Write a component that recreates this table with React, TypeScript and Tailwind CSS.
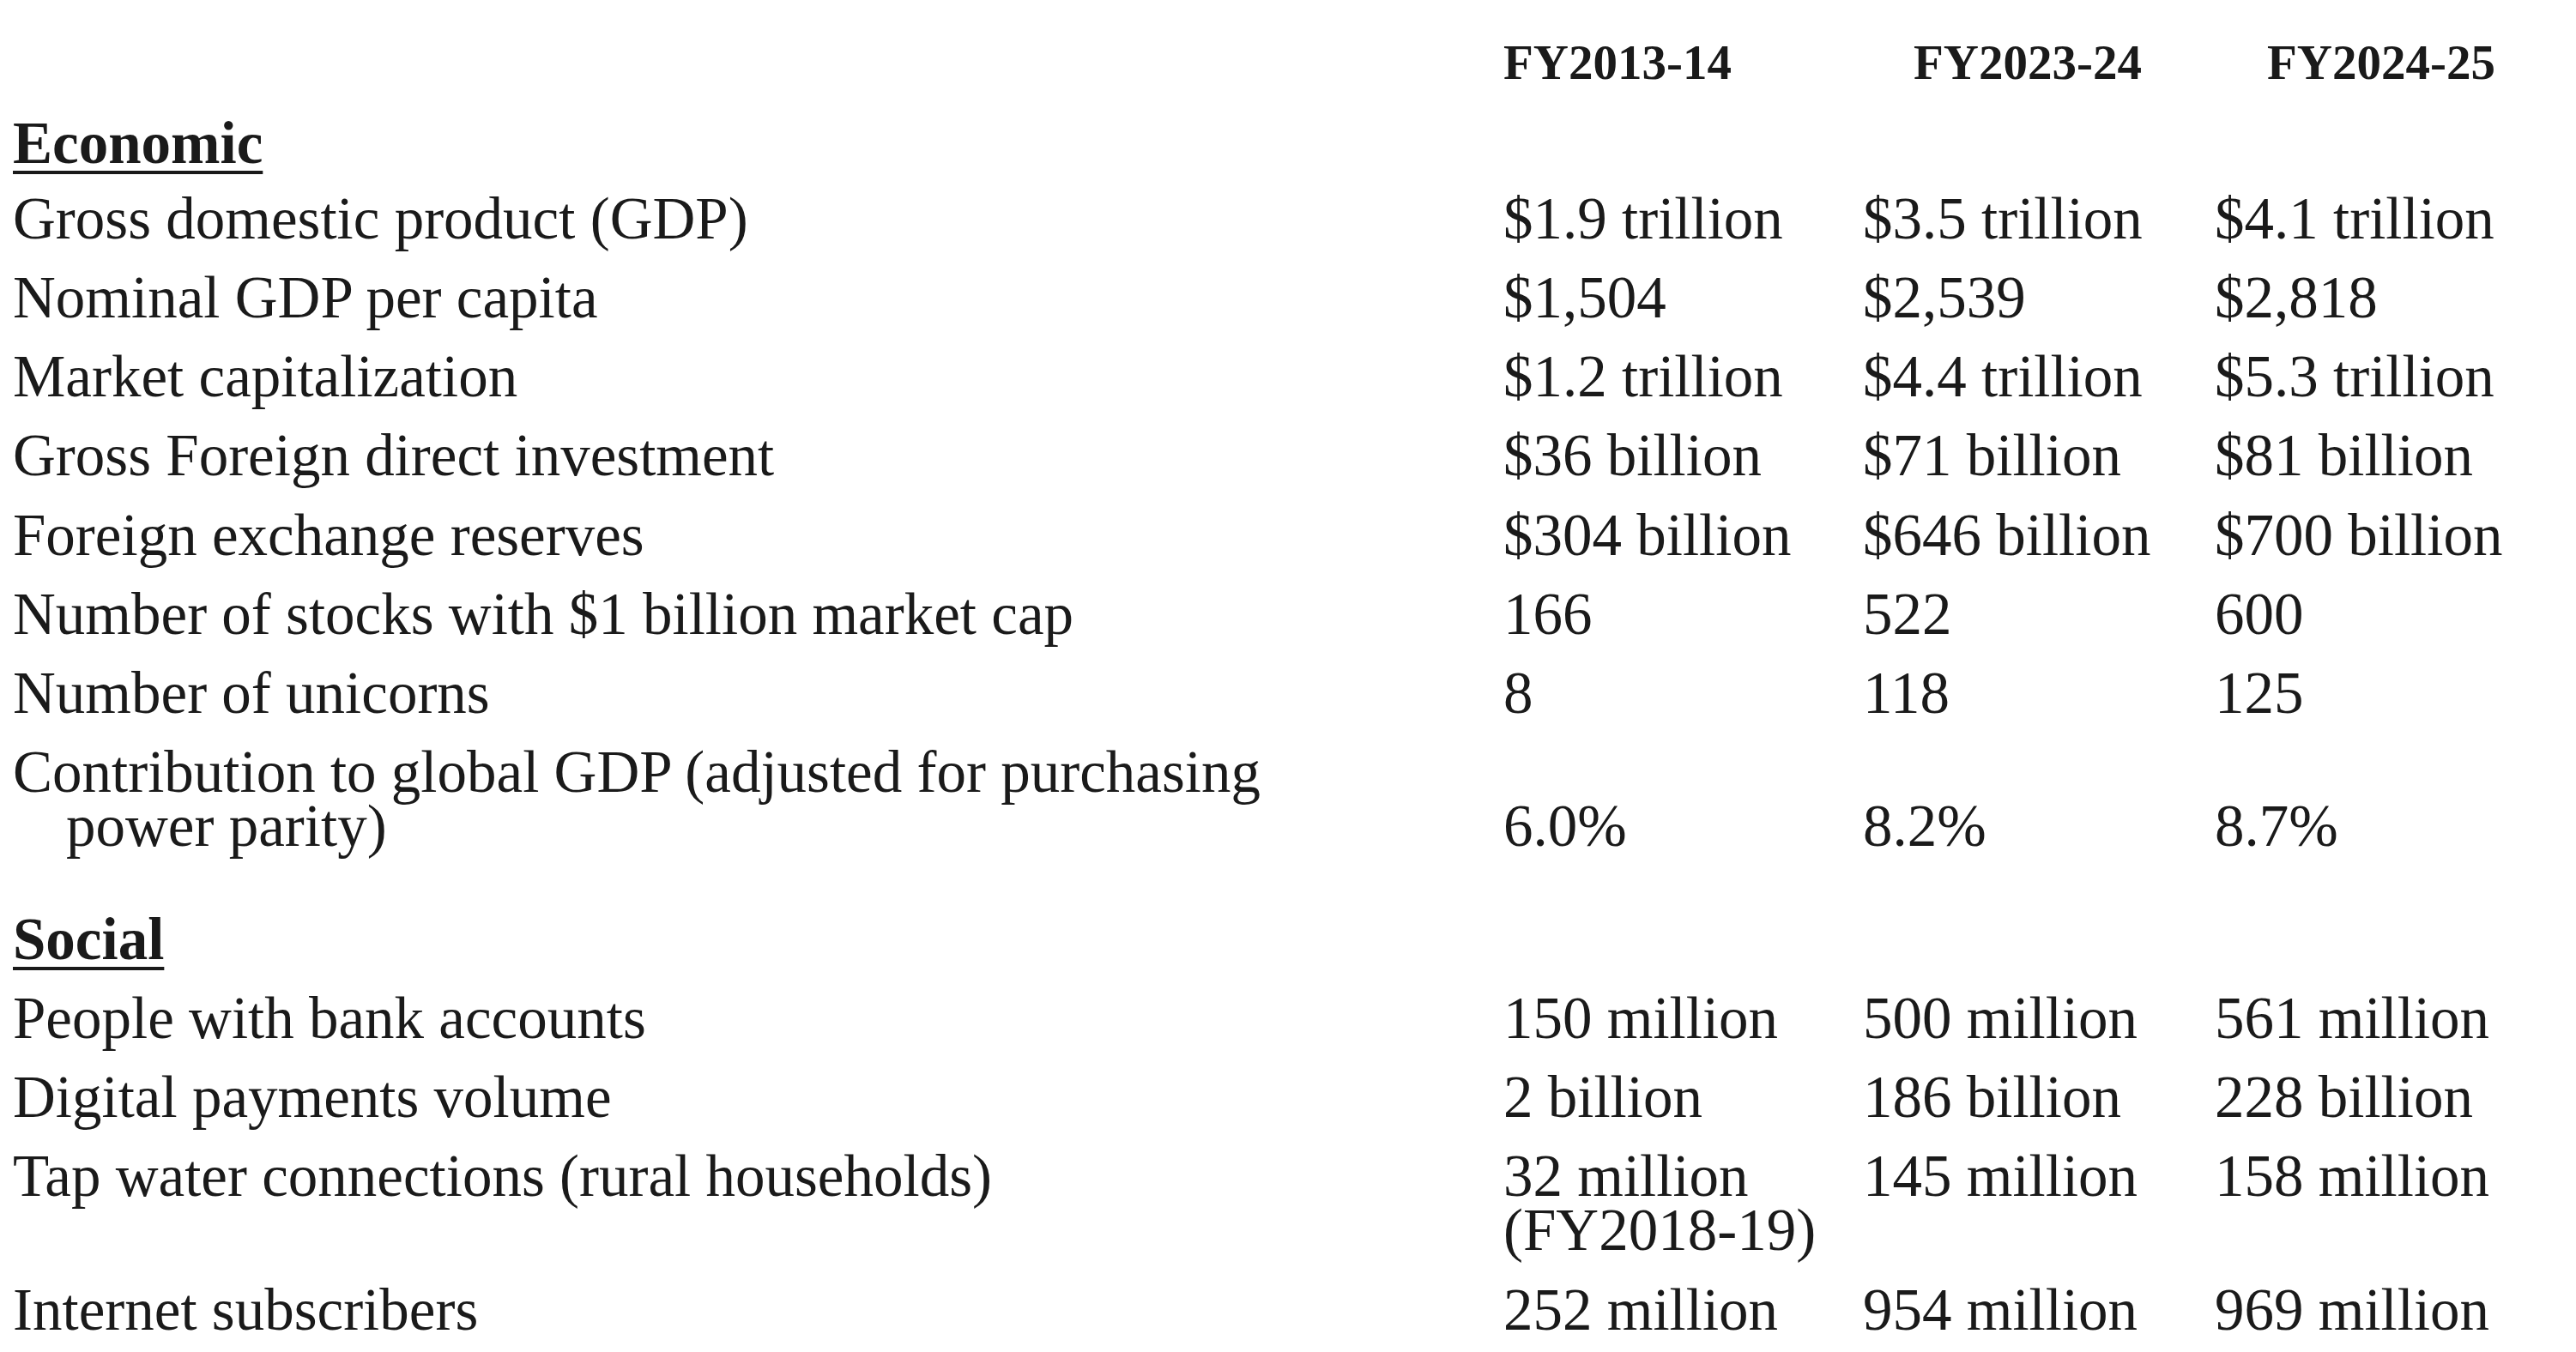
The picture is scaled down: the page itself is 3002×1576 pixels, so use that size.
import React from "react";

type Row = {
  label: string;
  values: [string, string, string];
  extra?: string;
};

const economic: Row[] = [
  { label: "Gross domestic product (GDP)", values: ["$1.9 trillion", "$3.5 trillion", "$4.1 trillion"] },
  { label: "Nominal GDP per capita", values: ["$1,504", "$2,539", "$2,818"] },
  { label: "Market capitalization", values: ["$1.2 trillion", "$4.4 trillion", "$5.3 trillion"] },
  { label: "Gross Foreign direct investment", values: ["$36 billion", "$71 billion", "$81 billion"] },
  { label: "Foreign exchange reserves", values: ["$304 billion", "$646 billion", "$700 billion"] },
  { label: "Number of stocks with $1 billion market cap", values: ["166", "522", "600"] },
  { label: "Number of unicorns", values: ["8", "118", "125"] },
];

const social: Row[] = [
  { label: "People with bank accounts", values: ["150 million", "500 million", "561 million"] },
  { label: "Digital payments volume", values: ["2 billion", "186 billion", "228 billion"] },
  {
    label: "Tap water connections (rural households)",
    values: ["32 million", "145 million", "158 million"],
    extra: "(FY2018-19)",
  },
  { label: "Internet subscribers", values: ["252 million", "954 million", "969 million"] },
];

function DataRow({ row }: { row: Row }) {
  return (
    <div className="grid grid-cols-[1737px_419px_410px_1fr] py-[14.6px] leading-[63px]">
      <div className="max-w-[1580px]">{row.label}</div>
      <div>
        <div>{row.values[0]}</div>
        {row.extra && <div>{row.extra}</div>}
      </div>
      <div>{row.values[1]}</div>
      <div>{row.values[2]}</div>
    </div>
  );
}

function SectionTitle({ title, className }: { title: string; className?: string }) {
  return (
    <div className={`leading-[63px] ${className ?? ""}`}>
      <span className="font-bold underline decoration-[4px] underline-offset-[9px]">{title}</span>
    </div>
  );
}

export default function App() {
  return (
    <div className="min-h-screen w-[3002px] bg-white pl-[15px] pt-[26.9px] font-['Liberation_Serif',serif] text-[69px] text-[#1a1a1a]">
      {/* column headings */}
      <div className="grid grid-cols-[1737px_419px_410px_1fr] py-[14.6px] text-[57px] font-bold leading-[63px]">
        <div />
        <div>FY2013-14</div>
        <div className="pl-[59px]">FY2023-24</div>
        <div className="pl-[61px]">FY2024-25</div>
      </div>

      <SectionTitle title="Economic" className="pt-[16.6px] pb-[10.6px]" />
      {economic.map((r) => (
        <DataRow key={r.label} row={r} />
      ))}

      <div className="grid grid-cols-[1737px_419px_410px_1fr] py-[14.6px] leading-[63px]">
        <div className="max-w-[1580px] pl-[62px] -indent-[62px]">
          Contribution to global GDP (adjusted for purchasing power parity)
        </div>
        <div className="flex items-end">6.0%</div>
        <div className="flex items-end">8.2%</div>
        <div className="flex items-end">8.7%</div>
      </div>

      <SectionTitle title="Social" className="mt-[39.4px] py-[14.6px]" />
      {social.map((r) => (
        <DataRow key={r.label} row={r} />
      ))}
    </div>
  );
}
